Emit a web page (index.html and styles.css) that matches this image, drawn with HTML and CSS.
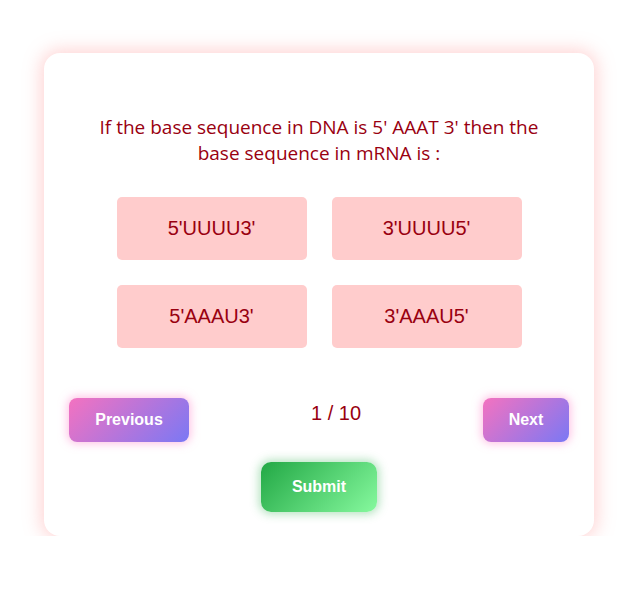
FILE: index.html
```html
<!DOCTYPE html>
<html>
<head>
<meta charset="utf-8">
<link rel="stylesheet" href="styles.css">
</head>
<body>
<div class="page">
  <div class="card">
    <p class="question">If the base sequence in DNA is 5' AAAT 3' then the base sequence in mRNA is :</p>
    <div class="options">
      <button class="option">5'UUUU3'</button>
      <button class="option">3'UUUU5'</button>
      <button class="option">5'AAAU3'</button>
      <button class="option">3'AAAU5'</button>
    </div>
    <div class="nav">
      <button class="nav-btn prev">Previous</button>
      <span class="counter">1 / 10</span>
      <button class="nav-btn next">Next</button>
    </div>
    <div class="submit-row">
      <button class="submit">Submit</button>
    </div>
  </div>
</div>
</body>
</html>
```
FILE: styles.css
```css
html, body {
  margin: 0;
  padding: 0;
  background: #ffffff;
}
.page {
  padding-top: 53px;
  padding-left: 44px;
}
.card {
  width: 550px;
  box-sizing: border-box;
  padding: 61px 25px 24px;
  background: #ffffff;
  border-radius: 16px;
  box-shadow: 0 0 18px 3px rgba(255, 130, 130, 0.35);
}
.question {
  margin: 0 auto;
  width: 470px;
  text-align: center;
  font-family: "Open Sans", "Noto Sans", sans-serif;
  font-size: 19px;
  line-height: 26px;
  color: #990010;
}
.options {
  margin: 31px auto 0;
  width: 405px;
  display: grid;
  grid-template-columns: 190px 190px;
  column-gap: 25px;
  row-gap: 25px;
}
.option {
  height: 63px;
  border: none;
  border-radius: 5px;
  background: #ffcccc;
  color: #990010;
  font-family: "Liberation Sans", Arial, sans-serif;
  font-size: 20px;
  padding: 0;
}
.nav {
  margin-top: 50px;
  display: flex;
  justify-content: space-between;
  align-items: flex-start;
}
.nav-btn {
  height: 44px;
  border: none;
  border-radius: 8px;
  background: linear-gradient(135deg, #f472c0 0%, #7b78f4 100%);
  color: #ffffff;
  font-family: "Liberation Sans", Arial, sans-serif;
  font-weight: bold;
  font-size: 16px;
  box-shadow: 0 0 8px 2px rgba(255, 150, 210, 0.55);
  padding: 0;
}
.prev { width: 120px; }
.next { width: 86px; }
.counter {
  padding-top: 3px;
  font-family: "Liberation Sans", Arial, sans-serif;
  font-size: 20px;
  line-height: 24px;
  color: #990010;
}
.submit-row {
  margin-top: 20px;
  display: flex;
  justify-content: center;
}
.submit {
  width: 116px;
  height: 50px;
  border: none;
  border-radius: 10px;
  background: linear-gradient(135deg, #22a845 0%, #86f99e 100%);
  color: #ffffff;
  font-family: "Liberation Sans", Arial, sans-serif;
  font-weight: bold;
  font-size: 16px;
  box-shadow: 0 0 10px 2px rgba(60, 180, 90, 0.4);
  padding: 0;
}
```
